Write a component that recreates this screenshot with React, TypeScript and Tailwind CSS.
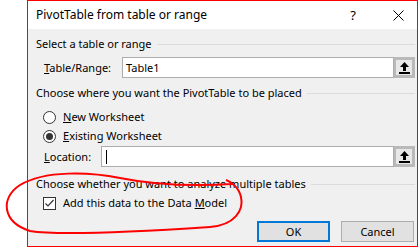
import React from 'react'

const UploadIcon = () => (
	<svg width="11" height="13" viewBox="0 0 11 13">
		<path d="M5.5 1 L10 6 L7 6 L7 10 L4 10 L4 6 L1 6 Z" fill="#000" />
		<rect x="0" y="11" width="11" height="2" fill="#000" />
	</svg>
)

const RefInput = ({ value, className }: { value?: string; className: string }) => (
	<div className={`flex h-[21px] ${className}`}>
		<div className="flex flex-1 items-center border border-[#adadad] bg-white pl-[3px]">
			{value ? <span>{value}</span> : <span className="ml-[1px] h-[14px] w-px bg-black" />}
		</div>
		<div className="flex w-[21px] items-center justify-center border-[3px] border-l-[2px] border-[#b9b9b9] bg-[#e8e8e8]">
			<UploadIcon />
		</div>
	</div>
)

const GroupTitle = ({ children }: { children: React.ReactNode }) => (
	<div className="flex h-[16px] items-center gap-[5px]">
		<span className="whitespace-nowrap">{children}</span>
		<div className="mt-[1px] h-px flex-1 bg-[#dcdcdc]" />
	</div>
)

const Radio = ({ checked }: { checked?: boolean }) => (
	<span className="flex h-[13px] w-[13px] items-center justify-center rounded-full border border-[#333] bg-white">
		{checked && <span className="h-[7px] w-[7px] rounded-full bg-[#333]" />}
	</span>
)

export default function App() {
	return (
		<div className="relative h-[248px] w-[419px] bg-white font-['Noto_Sans',sans-serif] text-[11px] leading-[16px] text-black">
			<div className="ml-[27px] flex h-[247px] w-[391px] flex-col border border-[#ff0000] bg-[#f0f0f0]">
				<div className="flex h-[28px] items-center bg-white pl-[8px]">
					<span className="flex-1 text-[12px]">PivotTable from table or range</span>
					<span className="w-[12px] text-center text-[13px]">?</span>
					<span className="ml-[33px] mr-[13px] flex w-[12px] justify-center">
						<svg width="11" height="11" viewBox="0 0 11 11">
							<path d="M0.5 0.5 L10.5 10.5 M10.5 0.5 L0.5 10.5" stroke="#000" strokeWidth="1" />
						</svg>
					</span>
				</div>
				<div className="flex flex-col pl-[8px] pr-[2px] pt-[7px]">
					<GroupTitle>Select a table or range</GroupTitle>
					<div className="mt-[5px] flex items-center pl-[8px]">
						<span className="w-[78px]">
							<u>T</u>able/Range:
						</span>
						<RefInput value="Table1" className="flex-1" />
					</div>
					<div className="mt-[7px]">
						<GroupTitle>Choose where you want the PivotTable to be placed</GroupTitle>
					</div>
					<div className="mt-[8px] flex h-[16px] items-center gap-[7px] pl-[7px]">
						<Radio />
						<span>
							<u>N</u>ew Worksheet
						</span>
					</div>
					<div className="mt-[3px] flex h-[16px] items-center gap-[7px] pl-[7px]">
						<Radio checked />
						<span>
							<u>E</u>xisting Worksheet
						</span>
					</div>
					<div className="mt-[2px] flex items-center pl-[8px]">
						<span className="w-[57px]">
							<u>L</u>ocation:
						</span>
						<RefInput className="flex-1" />
					</div>
					<div className="mt-[9px]">
						<GroupTitle>Choose whether you want to analyze multiple tables</GroupTitle>
					</div>
					<div className="mt-[3px] flex h-[16px] items-center gap-[7px] pl-[7px]">
						<span className="flex h-[13px] w-[13px] items-center justify-center border border-[#333] bg-white">
							<svg width="11" height="11" viewBox="0 0 11 11">
								<path d="M1.5 5.5 L4 8 L9.5 2" stroke="#333" strokeWidth="1.2" fill="none" />
							</svg>
						</span>
						<span>
							Add this data to the Data <u>M</u>odel
						</span>
					</div>
					<div className="mt-[10px] flex justify-end gap-[11px] pr-[1px]">
						<button className="h-[21px] w-[73px] border-2 border-[#0078d7] bg-[#e1e1e1] leading-none">OK</button>
						<button className="h-[21px] w-[73px] border border-[#adadad] bg-[#e1e1e1] leading-none">Cancel</button>
					</div>
				</div>
			</div>
			<svg className="pointer-events-none absolute left-0 top-0" width="419" height="248">
				<path
					d="M 232 184 C 200 186, 160 186, 120 178 C 90 172, 45 170, 20 185 C 0 198, 2 222, 30 231 C 60 236, 150 231, 210 227 C 235 225, 244 210, 241 197 C 239 188, 232 182, 226 180"
					stroke="#ff0000"
					strokeWidth="2"
					fill="none"
				/>
			</svg>
		</div>
	)
}
